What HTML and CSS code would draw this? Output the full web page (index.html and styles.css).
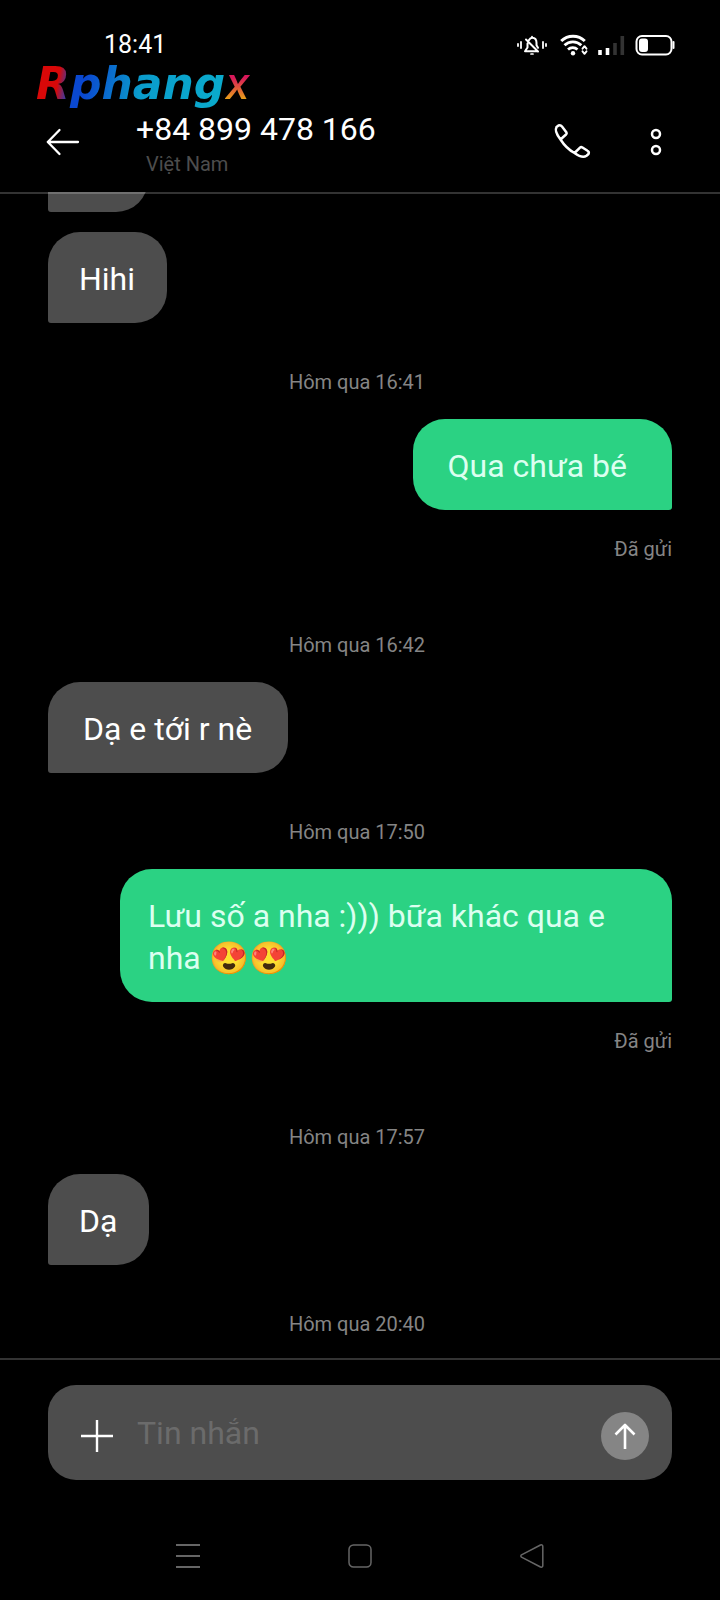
FILE: index.html
```
<!DOCTYPE html>
<html lang="vi">
<head>
<meta charset="utf-8">
<meta name="viewport" content="width=device-width, initial-scale=1">
<title>+84 899 478 166</title>
<link rel="stylesheet" href="styles.css">
</head>
<body>
<div class="screen">
  <div class="statusbar">
    <time class="clock">18:41</time>
    <svg class="status-icons" width="160" height="24" viewBox="0 0 160 24" fill="none" stroke="#fff" stroke-width="2" stroke-linecap="round" stroke-linejoin="round" aria-hidden="true">
      <path d="M2 11v2M5 9v6M27 9v6M30 11v2" stroke-width="1.800"/>
      <path d="M9 18.200h12.500M9.500 17.500l2-3v-4M13 7c1-1.800 2-2.200 3.200-2.200c3 0 4.300 2.500 4.300 5v2.500l1.500 2.500M10 6.500L22 18.500" stroke-width="2"/>
      <path d="M16 3.500v1M15 21h2" stroke-width="1.700"/>
      <path d="M45.200 8a17 17 0 0 1 23.600 0" stroke-width="3" stroke-linecap="butt"/>
      <path d="M48.500 12.300a12 12 0 0 1 16.800 0" stroke-width="2.800" stroke-linecap="butt"/>
      <path d="M52 16.500a7 7 0 0 1 9.500 0" stroke-width="2.700" stroke-linecap="butt"/>
      <circle cx="57" cy="20.300" r="2.200" fill="#fff" stroke="none"/>
      <path d="M66.500 15.700l2-2.500l2 2.500M66.500 18.300l2 2.500l2-2.500" stroke-width="1.900"/>
      <path d="M84 17v5M91.500 15v7" stroke-width="3.600" stroke-linecap="butt"/>
      <path d="M99 10v12M106.300 3v19" stroke="#333" stroke-width="3.600" stroke-linecap="butt"/>
      <rect x="120.500" y="3" width="35" height="18.500" rx="5.500"/>
      <rect x="123" y="5.500" width="9" height="13.500" rx="3" fill="#fff" stroke="none"/>
      <path d="M157.500 9v6" stroke-width="2"/>
    </svg>
  </div>

  <header class="header">
    <div class="watermark"><span class="watermark-main">Rphang</span><span class="watermark-x">x</span></div>
    <button class="icon-button back" type="button" aria-label="Quay lại">
      <svg width="36" height="28" viewBox="0 0 36 28" fill="none" stroke="#fff" stroke-width="2.300" stroke-linecap="round" stroke-linejoin="round"><path d="M13.500 2L1.800 14l11.700 12M1.800 14H32"/></svg>
    </button>
    <div class="contact">
      <h1 class="contact-name">+84 899 478 166</h1>
      <p class="contact-place">Việt Nam</p>
    </div>
    <div class="actions">
      <button class="icon-button" type="button" aria-label="Gọi">
        <svg width="40" height="40" viewBox="0 0 40 40" fill="none" stroke="#fff" stroke-width="2.500" stroke-linejoin="round" stroke-linecap="round"><path d="M4.500 5L6.500 3.500Q8.500 2.600 10 4.500L14.500 10.500Q15 11.500 14 12.500L8.500 17.500C12 23 17 28 22.500 31L28 25.700Q29 24.700 30.500 25.500L35.500 28.800Q37.500 30 36.500 32L34.500 33.800C32 35.500 28 35 22.500 31M8.500 17.500C5 13 2.800 8 4.500 5"/></svg>
      </button>
      <button class="icon-button" type="button" aria-label="Tùy chọn khác">
        <svg width="12" height="28" viewBox="0 0 12 28" fill="none" stroke="#fff" stroke-width="2.500"><circle cx="6" cy="6" r="4"/><circle cx="6" cy="22" r="4"/></svg>
      </button>
    </div>
  </header>

  <main class="chat">
    <div class="bubble received previous" aria-hidden="true"></div>
    <p class="bubble received">Hihi</p>
    <time class="stamp">Hôm qua 16:41</time>
    <p class="bubble sent roomy">Qua chưa bé</p>
    <p class="delivery">Đã gửi</p>
    <time class="stamp">Hôm qua 16:42</time>
    <p class="bubble received roomy">Dạ e tới r nè</p>
    <time class="stamp">Hôm qua 17:50</time>
    <p class="bubble sent">Lưu số a nha :))) bữa khác qua e nha 😍😍</p>
    <p class="delivery">Đã gửi</p>
    <time class="stamp">Hôm qua 17:57</time>
    <p class="bubble received">Dạ</p>
    <time class="stamp">Hôm qua 20:40</time>
  </main>

  <form class="composer">
    <div class="composer-box">
      <button class="icon-button composer-button" type="button" aria-label="Thêm tệp">
        <svg width="32" height="32" viewBox="0 0 32 32" stroke="#fff" stroke-width="2.400"><path d="M16 0v32M0 16h32"/></svg>
      </button>
      <input class="message-input" type="text" placeholder="Tin nhắn" aria-label="Tin nhắn">
      <button class="icon-button composer-button send" type="submit" aria-label="Gửi">
        <svg width="24" height="26" viewBox="0 0 24 26" fill="none" stroke="#fff" stroke-width="2.600" stroke-linejoin="round"><path d="M12 26V2M2.500 11.500L12 2l9.500 9.500"/></svg>
      </button>
    </div>
  </form>

  <nav class="navbar" aria-label="Điều hướng">
    <button class="icon-button" type="button" aria-label="Gần đây">
      <svg width="24" height="24" viewBox="0 0 24 24" stroke="#666" stroke-width="2"><path d="M0 1h24M0 12h24M0 23h24"/></svg>
    </button>
    <button class="icon-button" type="button" aria-label="Trang chủ">
      <svg width="24" height="24" viewBox="0 0 24 24" fill="none" stroke="#666" stroke-width="1.500"><rect x="1" y="1" width="22" height="22" rx="4.500"/></svg>
    </button>
    <button class="icon-button" type="button" aria-label="Trở lại">
      <svg width="24" height="24" viewBox="0 0 24 24" fill="none" stroke="#666" stroke-width="1.500" stroke-linejoin="round"><path d="M1.500 10.800L20.500 1Q22.800 0.400 22.800 2.500V21.500Q22.800 23.600 20.500 23L1.500 13.200Q0.200 12 1.500 10.800Z"/></svg>
    </button>
  </nav>
</div>
</body>
</html>
```
FILE: styles.css
```
* {
  box-sizing: border-box;
}

body {
  margin: 0;
  background: #000;
  color: #fff;
  font-family: Roboto, "Noto Sans", sans-serif;
}

p,
h1 {
  margin: 0;
  font-weight: 400;
}

.screen {
  display: flex;
  flex-direction: column;
  height: 100vh;
  overflow: hidden;
}

.icon-button {
  display: flex;
  align-items: center;
  justify-content: center;
  padding: 0;
  border: 0;
  background: none;
}

.statusbar {
  display: flex;
  align-items: center;
  justify-content: space-between;
  height: 72px;
  padding: 18px 44px 0 104px;
}

.clock {
  font-size: 25px;
  line-height: 28px;
}

.header {
  position: relative;
  z-index: 1;
  display: flex;
  align-items: flex-start;
  height: 120px;
  padding: 38px 58px 0 46px;
}

.header::after {
  content: "";
  position: absolute;
  top: 100%;
  left: 0;
  right: 0;
  height: 2px;
  background: rgba(255, 255, 255, 0.2);
}

.watermark {
  position: absolute;
  top: -15px;
  left: 36px;
  font: italic 700 44px/52px "DejaVu Sans", sans-serif;
  white-space: nowrap;
}

.watermark-main,
.watermark-x {
  color: transparent;
  -webkit-background-clip: text;
  background-clip: text;
}

.watermark-main {
  background-image: linear-gradient(100deg, #d80808 13%, #0a48d0 20%, #0a48d0 27%, #0a9ccc 55%, #0aaccc);
}

.watermark-x {
  font: italic 500 44px/52px Inter, sans-serif;
  background-image: linear-gradient(#d8185a 40%, #e8a018 80%);
}

.back {
  margin-top: 18px;
}

.contact {
  flex: 1;
  margin-left: 54px;
}

.contact-name {
  font-size: 32px;
  line-height: 38px;
}

.contact-place {
  padding: 4px 0 0 10px;
  color: #4d4d4d;
  font-size: 20px;
  line-height: 24px;
}

.actions {
  display: flex;
  align-items: center;
  gap: 58px;
  margin-top: 12px;
}

.chat {
  display: flex;
  flex: 1;
  flex-direction: column;
  align-items: flex-start;
  justify-content: flex-end;
  min-height: 0;
  padding: 0 48px;
  overflow: hidden;
}

.bubble {
  flex: none;
  max-width: calc(100% - 72px);
  min-width: 100px;
  min-height: 91px;
  padding: 26px 32px 23px 31px;
  border-radius: 32px;
  font-size: 32px;
  line-height: 42px;
}

.received {
  border-bottom-left-radius: 3px;
  background: #4d4d4d;
}

.sent {
  align-self: flex-end;
  padding-left: 28px;
  border-bottom-right-radius: 3px;
  background: #2bd283;
  color: #dcfff0;
}

.roomy {
  padding-right: 36px;
  padding-left: 35px;
}

.sent.roomy {
  padding-right: 45px;
}

.previous {
  margin-bottom: 20px;
}

.stamp,
.delivery {
  flex: none;
  align-self: stretch;
  color: #858585;
  font-size: 20px;
  line-height: 24px;
}

.stamp {
  padding: 47px 6px 25px 0;
  text-align: center;
}

.stamp:last-child {
  padding-bottom: 22px;
}

.delivery {
  padding: 27px 0 25px;
  text-align: right;
}

.composer {
  padding: 25px 48px 32px;
  border-top: 2px solid #333;
}

.composer-box {
  display: flex;
  align-items: center;
  height: 95px;
  padding: 0 23px 0 33px;
  border-radius: 28px;
  background: #4d4d4d;
}

.composer-button {
  margin-top: 7px;
}

.message-input {
  flex: 1;
  min-width: 0;
  padding: 0 24px;
  border: 0;
  outline: 0;
  background: none;
  color: #fff;
  font: 32px/42px Roboto, "Noto Sans", sans-serif;
}

.message-input::placeholder {
  color: #6b6b6b;
  opacity: 1;
}

.send {
  width: 48px;
  height: 48px;
  border-radius: 50%;
  background: #858585;
}

.navbar {
  display: grid;
  grid-template-columns: repeat(3, 1fr);
  height: 88px;
  padding: 0 102px;
}
```
